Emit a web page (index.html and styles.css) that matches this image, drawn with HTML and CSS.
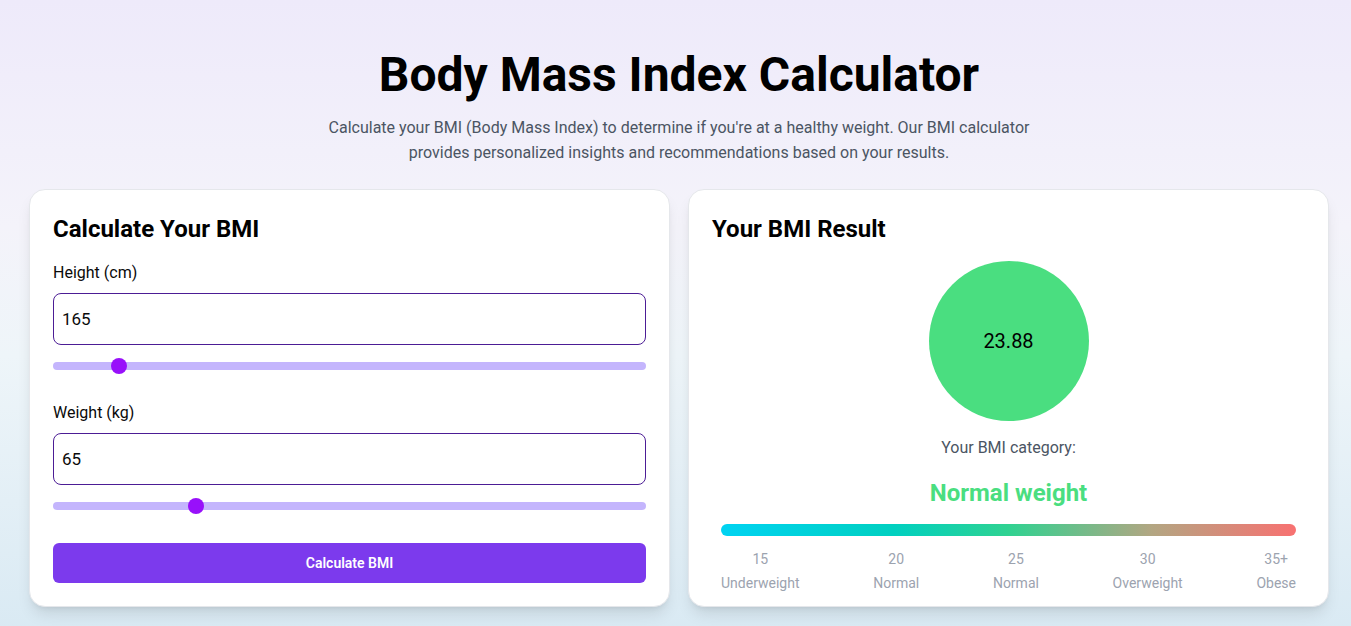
FILE: index.html
```html
<!DOCTYPE html>
<html lang="en">
<head>
<meta charset="utf-8">
<title>Body Mass Index Calculator</title>
<link rel="stylesheet" href="styles.css">
</head>
<body>
<main class="page">
  <header class="hero">
    <h1 class="hero-title">Body Mass Index Calculator</h1>
    <p class="hero-sub">Calculate your BMI (Body Mass Index) to determine if you're at a healthy weight. Our BMI calculator provides personalized insights and recommendations based on your results.</p>
  </header>
  <section class="cards">
    <div class="card">
      <h2 class="card-title">Calculate Your BMI</h2>
      <div class="field">
        <label class="field-label" for="h">Height (cm)</label>
        <input class="field-input" id="h" type="number" value="165">
        <input class="slider" type="range" min="150" max="300" value="165">
      </div>
      <div class="field">
        <label class="field-label" for="w">Weight (kg)</label>
        <input class="field-input" id="w" type="number" value="65">
        <input class="slider" type="range" min="30" max="180" value="65">
      </div>
      <button class="btn" type="button">Calculate BMI</button>
    </div>
    <div class="card card-result">
      <h2 class="card-title">Your BMI Result</h2>
      <div class="result">
        <div class="bmi-circle">23.88</div>
        <p class="cat-label">Your BMI category:</p>
        <p class="cat-value">Normal weight</p>
        <div class="scale">
          <div class="scale-bar"></div>
          <div class="scale-labels">
            <div class="scale-item"><span>15</span><span>Underweight</span></div>
            <div class="scale-item"><span>20</span><span>Normal</span></div>
            <div class="scale-item"><span>25</span><span>Normal</span></div>
            <div class="scale-item"><span>30</span><span>Overweight</span></div>
            <div class="scale-item"><span>35+</span><span>Obese</span></div>
          </div>
        </div>
      </div>
    </div>
  </section>
</main>
</body>
</html>
```
FILE: styles.css
```css
* { box-sizing: border-box; }
html, body { margin: 0; padding: 0; }
body {
  font-family: Roboto, "Liberation Sans", sans-serif;
  color: #0a0a0a;
  min-height: 626px;
  background: linear-gradient(to bottom, #eeeafa 0%, #f4f3fa 35%, #eef5f9 55%, #d8e9f3 100%);
}
.page {
  padding: 51px 22px 40px 29px;
}
.hero { text-align: center; }
.hero-title {
  margin: 0 0 16px;
  font-size: 48px;
  line-height: 48px;
  font-weight: 700;
  color: #000;
}
.hero-sub {
  margin: 0 auto 24px;
  max-width: 720px;
  font-size: 16px;
  line-height: 25px;
  color: #4b5563;
}
.cards {
  display: grid;
  grid-template-columns: 1fr 1fr;
  align-items: start;
  gap: 18px;
}
.card {
  background: #fff;
  border: 1px solid #e5e7eb;
  border-radius: 16px;
  padding: 23px;
  box-shadow: 0 10px 15px -3px rgba(0,0,0,0.1), 0 4px 6px -4px rgba(0,0,0,0.1);
}
.card-result { padding-bottom: 13px; }
.card-title {
  margin: 0 0 16px;
  font-size: 24px;
  line-height: 32px;
  font-weight: 700;
  color: #000;
}
.field { margin-bottom: 27px; }
.field + .field { margin-bottom: 29px; }
.field-label {
  display: block;
  font-size: 16px;
  line-height: 24px;
  margin-bottom: 8px;
  color: #0a0a0a;
}
.field-input {
  display: block;
  width: 100%;
  height: 52px;
  border: 1px solid #4c1d95;
  border-radius: 8px;
  padding: 0 8px;
  font-family: inherit;
  font-size: 17px;
  color: #0a0a0a;
  background: #fff;
  outline: none;
  -moz-appearance: textfield;
}
.field-input::-webkit-outer-spin-button,
.field-input::-webkit-inner-spin-button { -webkit-appearance: none; margin: 0; }
.slider {
  -webkit-appearance: none;
  appearance: none;
  display: block;
  width: 100%;
  height: 16px;
  margin: 13px 0 0;
  background: transparent;
}
.slider::-webkit-slider-runnable-track {
  height: 8px;
  border-radius: 4px;
  background: #c4b5fd;
}
.slider::-webkit-slider-thumb {
  -webkit-appearance: none;
  width: 16px;
  height: 16px;
  margin-top: -4px;
  border-radius: 50%;
  background: #9810fa;
  border: none;
}
.btn {
  display: block;
  width: 100%;
  height: 40px;
  border: none;
  border-radius: 6px;
  background: #7c3aed;
  color: #fff;
  font-family: inherit;
  font-size: 14px;
  font-weight: 600;
}
.result {
  display: flex;
  flex-direction: column;
  align-items: center;
}
.bmi-circle {
  width: 160px;
  height: 160px;
  border-radius: 50%;
  background: #4ade80;
  display: flex;
  align-items: center;
  justify-content: center;
  font-size: 20px;
  color: #000;
}
.cat-label {
  margin: 15px 0 0;
  font-size: 16px;
  line-height: 24px;
  color: #4b5563;
}
.cat-value {
  margin: 17px 0 0;
  font-size: 24px;
  line-height: 32px;
  font-weight: 700;
  color: #4ade80;
}
.scale {
  align-self: stretch;
  padding: 0 9px;
  margin-top: 15px;
}
.scale-bar {
  height: 12px;
  border-radius: 6px;
  background: linear-gradient(to right, #00d3f2 0%, #00d0c0 30%, #2fd291 50%, #b3a682 75%, #f87171 100%);
}
.scale-labels {
  display: flex;
  justify-content: space-between;
  margin-top: 13px;
}
.scale-item {
  display: flex;
  flex-direction: column;
  align-items: center;
  gap: 4px;
  font-size: 14px;
  line-height: 20px;
  color: #9ca3af;
}
```
